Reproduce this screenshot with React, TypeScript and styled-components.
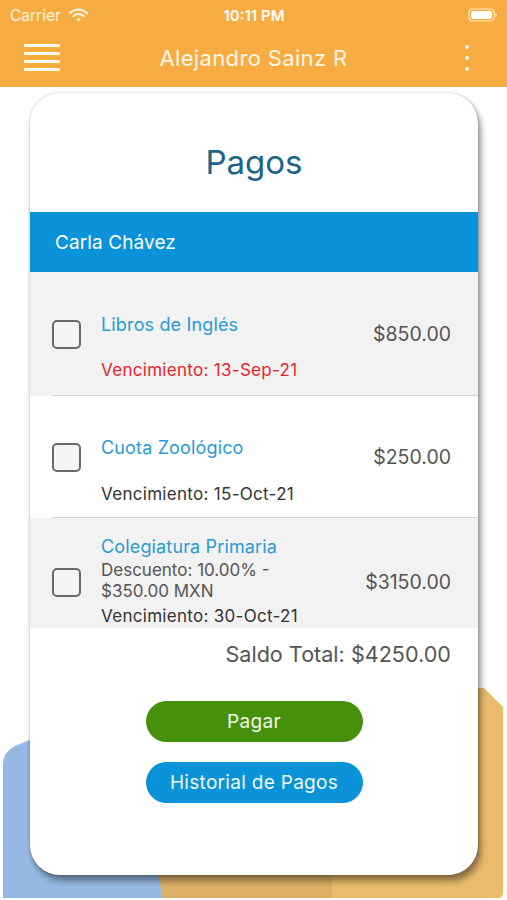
import React from "react";
import styled, { createGlobalStyle } from "styled-components";

const GlobalStyle = createGlobalStyle`
  html, body { margin: 0; padding: 0; background: #ffffff; }
  body { font-family: Inter, "Liberation Sans", Arial, sans-serif; }
  * { box-sizing: border-box; }
`;

const Page = styled.div`
  position: relative;
  width: 507px;
  height: 900px;
  overflow: hidden;
  background: #ffffff;
  display: flex;
  flex-direction: column;
`;

const Header = styled.header`
  background: #f7ac42;
  height: 87px;
  display: flex;
  flex-direction: column;
  color: #ffffff;
  position: relative;
  z-index: 2;
`;

const StatusBar = styled.div`
  height: 30px;
  display: grid;
  grid-template-columns: 1fr auto 1fr;
  align-items: center;
  padding: 0 9px 0 10px;
  font-size: 15px;
`;

const Carrier = styled.div`
  display: flex;
  align-items: center;
  gap: 8px;
  font-size: 15.5px;
  color: #fff4e0;
`;

const Clock = styled.div`
  font-weight: 600;
  font-size: 15px;
`;

const BatteryWrap = styled.div`
  justify-self: end;
  display: flex;
  align-items: center;
`;

const NavBar = styled.div`
  flex: 1;
  display: grid;
  grid-template-columns: 60px 1fr 60px;
  align-items: center;
  padding: 0 0 2px 0;
`;

const NavTitle = styled.div`
  text-align: center;
  font-size: 22px;
  letter-spacing: 0.35px;
  color: #fff6ea;
`;

const MenuButton = styled.div`
  justify-self: start;
  margin-left: 24px;
  width: 36px;
  display: flex;
  flex-direction: column;
  gap: 5px;
`;

const MenuLine = styled.span`
  display: block;
  height: 3px;
  background: #fff8ee;
`;

const MoreButton = styled.div`
  justify-self: end;
  margin-right: 38px;
  display: flex;
  flex-direction: column;
  gap: 7px;
`;

const Dot = styled.span`
  width: 4px;
  height: 4px;
  border-radius: 50%;
  background: #fff8ee;
`;

const Decor = styled.svg`
  position: absolute;
  left: 0;
  bottom: 0;
  width: 507px;
  height: 230px;
  z-index: 0;
`;

const Card = styled.main`
  position: relative;
  z-index: 1;
  margin: 6px 0 0 30px;
  width: 448px;
  height: 782px;
  background: #ffffff;
  border-radius: 30px;
  overflow: hidden;
  box-shadow: 0 0 3px rgba(0, 0, 0, 0.25), 3px 6px 6px rgba(0, 0, 0, 0.4);
  display: flex;
  flex-direction: column;
`;

const CardTitle = styled.h1`
  margin: 0;
  height: 119px;
  display: flex;
  align-items: center;
  justify-content: center;
  padding-top: 18px;
  font-weight: 400;
  font-size: 33px;
  color: #1b6389;
`;

const StudentBand = styled.div`
  height: 60px;
  background: #0a93d8;
  color: #ffffff;
  display: flex;
  align-items: center;
  padding-left: 25px;
  font-size: 19px;
  letter-spacing: 0.1px;
`;

const Row = styled.div<{ $gray?: boolean; $padTop?: number; $divider?: boolean }>`
  position: relative;
  display: grid;
  grid-template-columns: 49px 1fr auto;
  align-items: center;
  background: ${(p) => (p.$gray ? "#f2f2f2" : "#ffffff")};
  padding: ${(p) => p.$padTop ?? 0}px 27px 0 22px;
  &::after {
    content: "";
    display: ${(p) => (p.$divider ? "block" : "none")};
    position: absolute;
    left: 22px;
    right: 0;
    bottom: 0;
    height: 1px;
    background: #d6d6d6;
  }
`;

const Checkbox = styled.span`
  width: 29px;
  height: 29px;
  border: 2px solid #6a6a6a;
  border-radius: 5px;
  background: #f4f4f7;
`;

const TextCol = styled.div<{ $top: number; $bottom: number }>`
  display: flex;
  flex-direction: column;
  padding: ${(p) => p.$top}px 0 ${(p) => p.$bottom}px 0;
`;

const ItemTitle = styled.div`
  font-size: 18px;
  letter-spacing: 0.15px;
  line-height: 22px;
  color: #2b9ad6;
`;

const Discount = styled.div`
  margin-top: 2px;
  font-size: 17px;
  line-height: 21px;
  color: #555555;
`;

const DueDate = styled.div<{ $late?: boolean; $gap: number }>`
  margin-top: ${(p) => p.$gap}px;
  font-size: 17px;
  letter-spacing: 0.3px;
  line-height: 22px;
  color: ${(p) => (p.$late ? "#e8242b" : "#333333")};
`;

const Price = styled.div`
  font-size: 19.5px;
  color: #555555;
`;

const Total = styled.div`
  margin-top: 13px;
  padding-right: 27px;
  text-align: right;
  font-size: 21.6px;
  line-height: 26px;
  color: #555555;
`;

const Actions = styled.div`
  margin-top: 34px;
  display: flex;
  flex-direction: column;
  align-items: center;
  gap: 20px;
`;

const ActionButton = styled.button<{ $bg: string }>`
  width: 217px;
  height: 41px;
  border: none;
  border-radius: 21px;
  background: ${(p) => p.$bg};
  color: #f2f8ee;
  font-family: inherit;
  font-size: 19px;
  letter-spacing: 0.3px;
  padding: 0;
`;

const WifiIcon = () => (
  <svg width="19" height="14" viewBox="0 0 19 14">
    <path d="M1 5.2 A12 12 0 0 1 18 5.2" fill="none" stroke="#fff4e0" strokeWidth="2.2" strokeLinecap="round" />
    <path d="M4.2 8.2 A7.4 7.4 0 0 1 14.8 8.2" fill="none" stroke="#fff4e0" strokeWidth="2.2" strokeLinecap="round" />
    <path d="M7.4 11.2 L9.5 13.4 L11.6 11.2 A3 3 0 0 0 7.4 11.2 Z" fill="#fff4e0" />
  </svg>
);

const BatteryIcon = () => (
  <svg width="30" height="14" viewBox="0 0 30 14">
    <rect x="1" y="1" width="25" height="12" rx="3.5" fill="none" stroke="#fde9c8" strokeWidth="1.2" />
    <rect x="3" y="3" width="21" height="8" rx="2" fill="#ffffff" />
    <path d="M27.5 5 Q29 5.5 29 7 Q29 8.5 27.5 9 Z" fill="#fde9c8" />
  </svg>
);

type Item = {
  title: string;
  price: string;
  due: string;
  late?: boolean;
  discount?: string[];
  gray: boolean;
  padTop: number;
  top: number;
  bottom: number;
  gap: number;
  divider: boolean;
};

const items: Item[] = [
  { title: "Libros de Inglés", price: "$850.00", due: "Vencimiento: 13-Sep-21", late: true, gray: true, padTop: 0, top: 42, bottom: 15, gap: 23, divider: true },
  { title: "Cuota Zoológico", price: "$250.00", due: "Vencimiento: 15-Oct-21", gray: false, padTop: 0, top: 41, bottom: 13, gap: 24, divider: true },
  {
    title: "Colegiatura Primaria",
    price: "$3150.00",
    due: "Vencimiento: 30-Oct-21",
    discount: ["Descuento: 10.00% -", "$350.00 MXN"],
    gray: true,
    padTop: 18,
    top: 0,
    bottom: 1,
    gap: 3,
    divider: false,
  },
];

export default function App() {
  return (
    <>
      <GlobalStyle />
      <Page>
        <Decor viewBox="0 670 507 230" aria-hidden="true">
          <path d="M150 898 V688 H484 L503 707 V893 Q503 898 498 898 Z" fill="#e9bb6b" />
          <rect x="150" y="872" width="182" height="26" fill="#dcaf66" />
          <path d="M3 898 V764 Q3 752 15 746 L32 739 H200 V872 H157 L163 898 Z" fill="#95b9e3" />
        </Decor>
        <Header>
          <StatusBar>
            <Carrier>
              Carrier <WifiIcon />
            </Carrier>
            <Clock>10:11 PM</Clock>
            <BatteryWrap>
              <BatteryIcon />
            </BatteryWrap>
          </StatusBar>
          <NavBar>
            <MenuButton>
              <MenuLine />
              <MenuLine />
              <MenuLine />
              <MenuLine />
            </MenuButton>
            <NavTitle>Alejandro Sainz R</NavTitle>
            <MoreButton>
              <Dot />
              <Dot />
              <Dot />
            </MoreButton>
          </NavBar>
        </Header>
        <Card>
          <CardTitle>Pagos</CardTitle>
          <StudentBand>Carla Chávez</StudentBand>
          {items.map((it) => (
            <Row key={it.title} $gray={it.gray} $padTop={it.padTop} $divider={it.divider}>
              <Checkbox />
              <TextCol $top={it.top} $bottom={it.bottom}>
                <ItemTitle>{it.title}</ItemTitle>
                {it.discount && (
                  <Discount>
                    {it.discount.map((d) => (
                      <div key={d}>{d}</div>
                    ))}
                  </Discount>
                )}
                <DueDate $late={it.late} $gap={it.gap}>
                  {it.due}
                </DueDate>
              </TextCol>
              <Price>{it.price}</Price>
            </Row>
          ))}
          <Total>Saldo Total: $4250.00</Total>
          <Actions>
            <ActionButton $bg="#46900b">Pagar</ActionButton>
            <ActionButton $bg="#0b93d9">Historial de Pagos</ActionButton>
          </Actions>
        </Card>
      </Page>
    </>
  );
}
